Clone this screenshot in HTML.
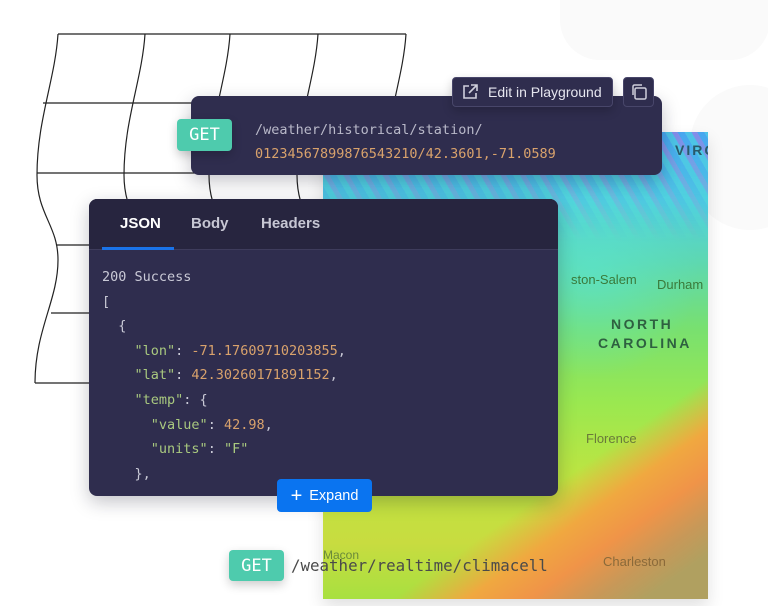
<!DOCTYPE html>
<html><head><meta charset="utf-8"><style>
*{margin:0;padding:0;box-sizing:border-box}
body{width:768px;height:606px;overflow:hidden;background:#fff;position:relative;font-family:"Liberation Sans",sans-serif}
.abs{position:absolute}
.mono{font-family:"DejaVu Sans Mono","Liberation Mono",monospace}
.card{background:#2f2d4e;border-radius:8px;box-shadow:0 6px 18px rgba(20,20,40,.25)}
.get{background:#4ecbad;color:#fff;border-radius:4px;font-size:17px;display:flex;align-items:center;justify-content:center;box-shadow:0 4px 10px rgba(0,0,0,.2)}
.code div{height:24.6px;line-height:24.6px;white-space:pre}
.k{color:#a9c97f}.n{color:#d9a26c}.p{color:#c9c9d6}
</style></head><body>
<div class="abs" style="left:560px;top:0;width:210px;height:60px;background:#fafafa;border-radius:0 0 40px 40px"></div>
<div class="abs" style="left:690px;top:85px;width:120px;height:145px;background:#fafafa;border-radius:70px"></div>
<svg class="abs" style="left:0;top:0" width="768" height="606">
<g fill="none" stroke="#222" stroke-width="1.2">
<path id="c" d="M58,34 C55,80 37,120 37,175 C37,215 58,225 58,260 C58,300 35,330 35,383"/>
<use href="#c" x="87"/><use href="#c" x="172"/><use href="#c" x="260"/><use href="#c" x="348"/>
<line x1="58" y1="34" x2="406" y2="34"/>
<line x1="43" y1="103" x2="391" y2="103"/>
<line x1="37" y1="173" x2="385" y2="173"/>
<line x1="57" y1="245" x2="405" y2="245"/>
<line x1="51" y1="313" x2="399" y2="313"/>
<line x1="35" y1="383" x2="383" y2="383"/>
</g></svg>
<div class="abs" style="left:323px;top:132px;width:385px;height:467px;overflow:hidden;box-shadow:0 8px 16px rgba(0,0,0,.12);
background:
linear-gradient(145deg,transparent 70%,#f0a840 77%,#f09448 83%,#c89858 89%,#b0a060 94%),
radial-gradient(circle at 70% 30%,rgba(90,230,210,.6) 0,transparent 25%),
linear-gradient(180deg,#4cb8f0 0%,#50d0e0 15%,#5ed8b0 28%,#78e070 42%,#9ae850 58%,#c0e440 75%,#c8dc40 88%,#a8e040 100%)">
<div class="abs" style="left:0;top:0;width:385px;height:110px;background:repeating-linear-gradient(60deg,rgba(230,60,220,.5) 0 5px,rgba(60,120,240,.4) 5px 11px,rgba(80,230,200,.3) 11px 17px);opacity:.7;-webkit-mask:linear-gradient(#000,transparent)"></div>
<div class="abs" style="left:352px;top:10px;color:#2a5a6a;font-size:14px;font-weight:bold;letter-spacing:2px">VIRGI</div>
<div class="abs" style="left:248px;top:140px;color:#3a7a3a;font-size:13px">ston-Salem</div>
<div class="abs" style="left:334px;top:145px;color:#3a7a3a;font-size:13px">Durham</div>
<div class="abs" style="left:288px;top:184px;color:#2e6040;font-size:14px;font-weight:bold;letter-spacing:2.5px">NORTH</div>
<div class="abs" style="left:275px;top:203px;color:#2e6040;font-size:14px;font-weight:bold;letter-spacing:2.5px">CAROLINA</div>
<div class="abs" style="left:263px;top:299px;color:#6a7a3a;font-size:13px">Florence</div>
<div class="abs" style="left:280px;top:422px;color:#8a6a3a;font-size:13px">Charleston</div>
<div class="abs" style="left:0;top:416px;color:#6a8a3a;font-size:12px">Macon</div>
</div>
<div class="abs card" style="left:191px;top:96px;width:471px;height:79px"></div>
<div class="abs get mono" style="left:177px;top:119px;width:55px;height:32px">GET</div>
<div class="abs mono" style="left:255px;top:118px;font-size:13.5px;line-height:24px;color:#b9b9c9">/weather/historical/station/<br><span style="color:#d9a26c">01234567899876543210/42.3601,-71.0589</span></div>
<div class="abs" style="left:452px;top:77px;width:161px;height:30px;background:#2f2d4e;border:1px solid #48466a;border-radius:4px;color:#e6e6ef;font-size:14px;display:flex;align-items:center;padding-left:8px;box-shadow:0 4px 10px rgba(0,0,0,.2)">
<svg width="18" height="18" viewBox="0 0 18 18" fill="none" stroke="#cfcfdc" stroke-width="1.6"><path d="M8 3H3v12h12v-5"/><path d="M10 2h6v6M16 2L8 10"/></svg><span style="margin-left:9px">Edit in Playground</span></div>
<div class="abs" style="left:623px;top:77px;width:31px;height:30px;background:#2f2d4e;border:1px solid #48466a;border-radius:4px;display:flex;align-items:center;justify-content:center">
<svg width="18" height="18" viewBox="0 0 18 18" fill="none" stroke="#cfcfdc" stroke-width="1.5"><rect x="5" y="5" width="11" height="11" rx="1.5"/><path d="M3 12V3.5A1.5 1.5 0 0 1 4.5 2H12"/></svg></div>
<div class="abs card" style="left:89px;top:199px;width:469px;height:297px;overflow:hidden">
<div style="height:51px;background:#27253f;border-bottom:1px solid #3e3c5c;position:relative;color:#c7c7d4;font-size:15px;font-weight:bold">
<span class="abs" style="left:31px;top:16px;color:#fff">JSON</span>
<span class="abs" style="left:102px;top:16px">Body</span>
<span class="abs" style="left:172px;top:16px">Headers</span>
<div class="abs" style="left:13px;top:48px;width:72px;height:3px;background:#1a73e8"></div></div>
<div class="code mono" style="position:absolute;left:13px;top:66px;font-size:13.5px;color:#c9c9d6">
<div>200 Success</div><div>[</div><div>  {</div>
<div>    <span class="k">"lon"</span>: <span class="n">-71.17609710203855</span>,</div>
<div>    <span class="k">"lat"</span>: <span class="n">42.30260171891152</span>,</div>
<div>    <span class="k">"temp"</span>: {</div>
<div>      <span class="k">"value"</span>: <span class="n">42.98</span>,</div>
<div>      <span class="k">"units"</span>: <span class="k">"F"</span></div>
<div>    },</div></div></div>
<div class="abs" style="left:277px;top:479px;width:95px;height:33px;background:#0a74f0;border-radius:4px;color:#fff;font-size:14.5px;display:flex;align-items:center;justify-content:center"><span style="font-size:20px;margin-right:7px;line-height:1">+</span>Expand</div>
<div class="abs get mono" style="left:229px;top:550px;width:55px;height:31px">GET</div>
<div class="abs mono" style="left:291px;top:556px;font-size:15.8px;color:#4a4a4a">/weather/realtime/climacell</div>
</body></html>
